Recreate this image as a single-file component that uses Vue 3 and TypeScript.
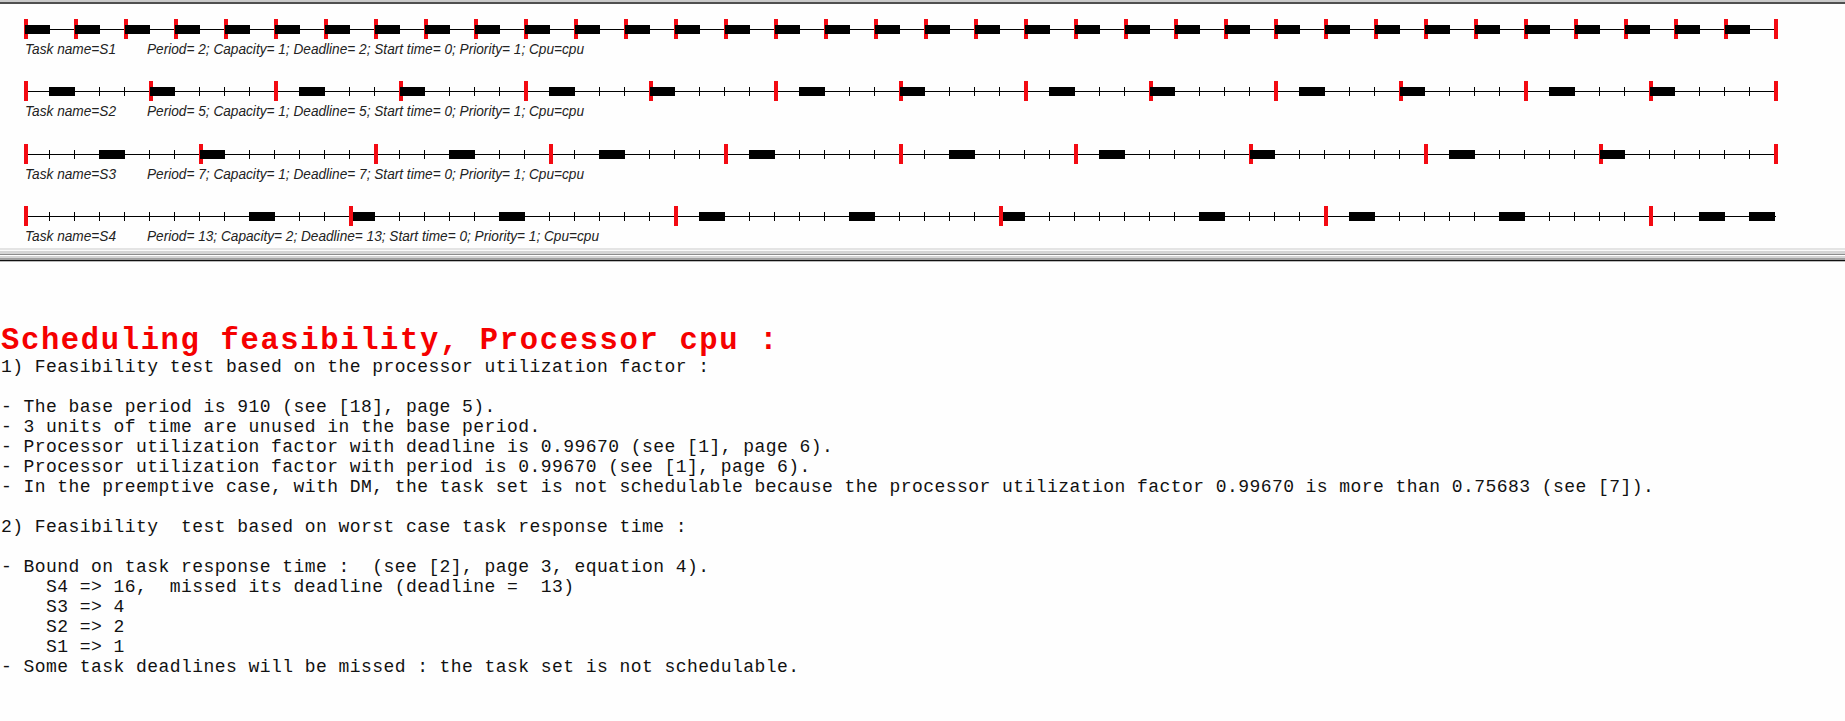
<script setup lang="ts">
interface Task {
  name: string
  period: number
  capacity: number
  top: number
  labelY: number
  width: number
  runs: number[]
  markersInFront: boolean
}

const UNIT = 25
const ORIGIN = 24
const UNITS = 70

const tasks: Task[] = [
  { name: 'S1', period: 2, capacity: 1, top: 19, labelY: 54, width: 437, markersInFront: false,
    runs: Array.from({ length: 35 }, (_, i) => i * 2) },
  { name: 'S2', period: 5, capacity: 1, top: 81, labelY: 116, width: 437, markersInFront: false,
    runs: [1, 5, 11, 15, 21, 25, 31, 35, 41, 45, 51, 55, 61, 65] },
  { name: 'S3', period: 7, capacity: 1, top: 144, labelY: 179, width: 437, markersInFront: false,
    runs: [3, 7, 17, 23, 29, 37, 43, 49, 57, 63] },
  { name: 'S4', period: 13, capacity: 2, top: 206, labelY: 241, width: 452, markersInFront: true,
    runs: [9, 13, 19, 27, 33, 39, 47, 53, 59, 67, 69] },
]

const at = (u: number): number => ORIGIN + u * UNIT
const ticks = Array.from({ length: UNITS - 1 }, (_, i) => i + 1)
const releases = (t: Task): number[] =>
  Array.from({ length: Math.floor(UNITS / t.period) + 1 }, (_, i) => i * t.period)
const details = (t: Task): string =>
  `Period= ${t.period}; Capacity= ${t.capacity}; Deadline= ${t.period}; Start time= 0; Priority= 1; Cpu=cpu`

const report = `1) Feasibility test based on the processor utilization factor :

- The base period is 910 (see [18], page 5).
- 3 units of time are unused in the base period.
- Processor utilization factor with deadline is 0.99670 (see [1], page 6).
- Processor utilization factor with period is 0.99670 (see [1], page 6).
- In the preemptive case, with DM, the task set is not schedulable because the processor utilization factor 0.99670 is more than 0.75683 (see [7]).

2) Feasibility  test based on worst case task response time :

- Bound on task response time :  (see [2], page 3, equation 4).
    S4 => 16,  missed its deadline (deadline =  13)
    S3 => 4
    S2 => 2
    S1 => 1
- Some task deadlines will be missed : the task set is not schedulable.`
</script>

<template>
  <main class="window">
    <div class="top-edge"></div>
    <svg class="timeline" width="1845" height="244" viewBox="0 4 1845 244">
      <g v-for="t in tasks" :key="t.name">
        <rect class="ink" :x="ORIGIN" :y="t.top + 10" width="1752" height="1" />
        <rect v-for="u in ticks" :key="u" class="ink" :x="at(u)" :y="t.top + 6" width="1" height="9" />
        <g v-if="!t.markersInFront">
          <rect v-for="r in releases(t)" :key="r" class="release" :x="at(r)" :y="t.top" width="4" height="20" />
        </g>
        <rect v-for="r in t.runs" :key="r" class="ink" :x="at(r) + (r % t.period === 0 ? 1 : 0)" :y="t.top + 6" :width="r % t.period === 0 ? 25 : 26" height="9" />
        <g v-if="t.markersInFront">
          <rect v-for="r in releases(t)" :key="r" class="release" :x="at(r)" :y="t.top" width="4" height="20" />
        </g>
        <text class="label" x="25" :y="t.labelY" textLength="91" lengthAdjust="spacingAndGlyphs">Task name={{ t.name }}</text>
        <text class="label" x="147" :y="t.labelY" :textLength="t.width" lengthAdjust="spacingAndGlyphs">{{ details(t) }}</text>
      </g>
    </svg>
    <div class="divider"></div>
    <section class="report">
      <h1>Scheduling feasibility, Processor cpu :</h1>
      <pre>{{ report }}</pre>
    </section>
  </main>
</template>

<style>
body {
  margin: 0;
  background: #fefefe;
  overflow: hidden;
}
</style>

<style scoped>
.window {
  width: 1845px;
  height: 721px;
  overflow: hidden;
  background: #fefefe;
}
.top-edge {
  height: 4px;
  background: linear-gradient(#cacaca 0 2px, #505050 2px 4px);
}
.timeline {
  display: block;
  shape-rendering: crispEdges;
}
.ink {
  fill: #000;
}
.release {
  fill: #f30a12;
}
.label {
  font: italic 14px "Liberation Sans", Arial, sans-serif;
  fill: #222;
}
.divider {
  height: 14px;
  background: linear-gradient(
    #e4e4e4 0 2px, #fafafa 2px 3px, #d4d4d4 3px 6px, #8c8c8c 6px 7px,
    #fff 7px 8px, #d4d4d4 8px 10px, #a0a0a0 10px 12px, #111 12px 13px, #bbb 13px 14px
  );
}
.report {
  padding: 62px 0 0 1px;
  font-family: "Liberation Mono", "Courier New", monospace;
}
h1 {
  margin: 0;
  height: 33px;
  line-height: 35px;
  font-size: 30.5px;
  letter-spacing: 1.65px;
  color: #f50000;
  white-space: pre;
}
pre {
  margin: 0;
  font-family: inherit;
  font-size: 18px;
  line-height: 20px;
  letter-spacing: 0.445px;
  color: #111;
}
</style>
